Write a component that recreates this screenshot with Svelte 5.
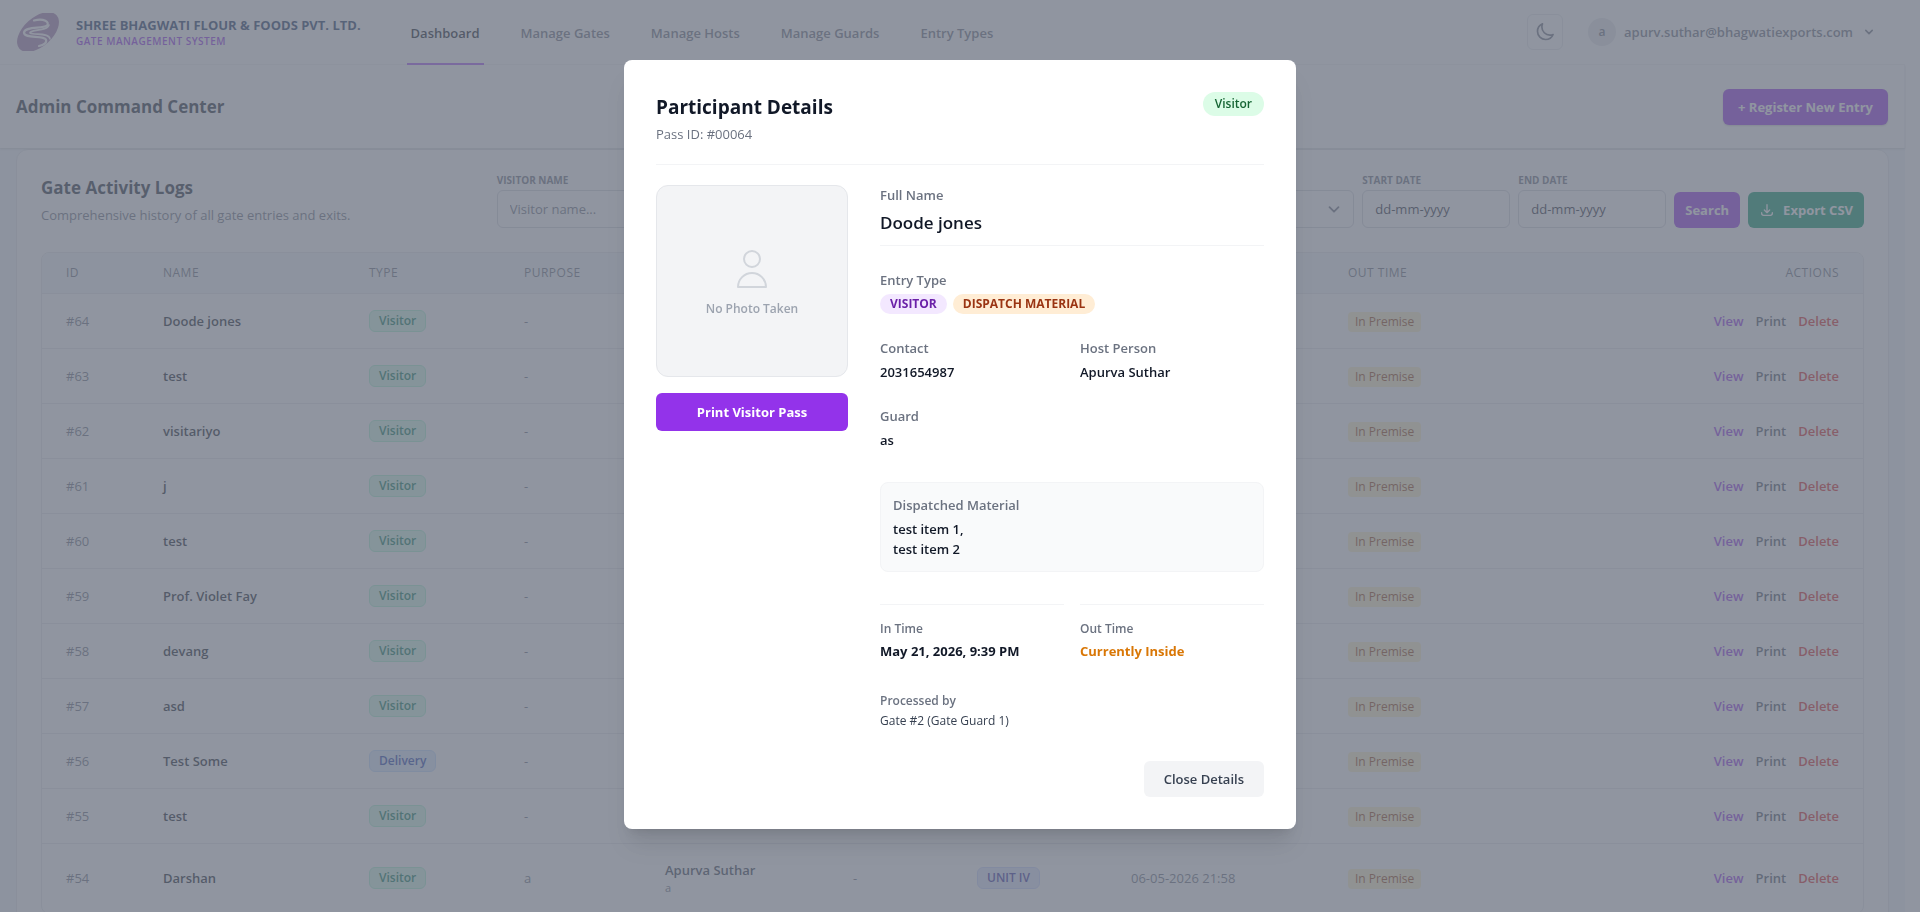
<script>
  const navLinks = ["Dashboard", "Manage Gates", "Manage Hosts", "Manage Guards", "Entry Types"];

  const entries = [
    { id: 64, name: "Doode jones", type: "Visitor", purpose: "-" },
    { id: 63, name: "test", type: "Visitor", purpose: "-" },
    { id: 62, name: "visitariyo", type: "Visitor", purpose: "-" },
    { id: 61, name: "j", type: "Visitor", purpose: "-" },
    { id: 60, name: "test", type: "Visitor", purpose: "-" },
    { id: 59, name: "Prof. Violet Fay", type: "Visitor", purpose: "-" },
    { id: 58, name: "devang", type: "Visitor", purpose: "-" },
    { id: 57, name: "asd", type: "Visitor", purpose: "-" },
    { id: 56, name: "Test Some", type: "Delivery", purpose: "-" },
    { id: 55, name: "test", type: "Visitor", purpose: "-" },
    {
      id: 54,
      name: "Darshan",
      type: "Visitor",
      purpose: "a",
      host: "Apurva Suthar",
      hostNote: "a",
      vehicle: "-",
      unit: "UNIT IV",
      inTime: "06-05-2026 21:58",
    },
  ];

  let showDetails = $state(true);
  let visitorName = $state("");
  let startDate = $state("");
  let endDate = $state("");

  function openDetails() {
    showDetails = true;
  }

  function closeDetails() {
    showDetails = false;
  }
</script>

<div class="app">
  <nav class="navbar">
    <a class="brand" href="/">
      <svg class="logo" viewBox="0 0 44 38" aria-hidden="true">
        <ellipse cx="22" cy="19" rx="25" ry="14.5" transform="rotate(-42 22 19)" fill="#a57fae" />
        <path
          d="M18 7.500C28 5 34 9 31 12.500C27 16 9 13 8 19.500C8 26 27 22 30 26.500C31 30 28 32 23 33"
          fill="none"
          stroke="#fff"
          stroke-width="2.2"
        />
        <path
          d="M14 19.5C16 16 31 18.500 33 12M14 20C18 22.500 33 19 34 26"
          fill="none"
          stroke="#fff"
          stroke-width="1.6"
        />
      </svg>
      <span class="brand-text">
        <span class="brand-name">SHREE BHAGWATI FLOUR &amp; FOODS PVT. LTD.</span>
        <span class="brand-sub">GATE MANAGEMENT SYSTEM</span>
      </span>
    </a>

    <div class="nav-links">
      {#each navLinks as link, i}
        <a href="/" class:active={i === 0}>{link}</a>
      {/each}
    </div>

    <div class="nav-right">
      <button class="theme-toggle" aria-label="Toggle theme">
        <svg viewBox="0 0 24 24" width="20" height="20">
          <path
            d="M21.752 15.002A9.718 9.718 0 0118 15.750c-5.385 0-9.750-4.365-9.750-9.750 0-1.330.266-2.597.748-3.752A9.753 9.753 0 003 11.250C3 16.635 7.365 21 12.750 21a9.753 9.753 0 009.002-5.998z"
          />
        </svg>
      </button>
      <button class="user-menu">
        <span class="avatar">a</span>
        <span>apurv.suthar@bhagwatiexports.com</span>
        <svg viewBox="0 0 20 20" width="16" height="16">
          <path d="M6 8l4 4 4-4" />
        </svg>
      </button>
    </div>
  </nav>

  <header class="page-header">
    <h1>Admin Command Center</h1>
    <button class="btn primary register">+ Register New Entry</button>
  </header>

  <main>
    <section class="card">
      <div class="card-head">
        <div>
          <h2>Gate Activity Logs</h2>
          <p>Comprehensive history of all gate entries and exits.</p>
        </div>

        <form class="filters" onsubmit={(e) => e.preventDefault()}>
          <div class="field wide">
            <label for="visitor-name">VISITOR NAME</label>
            <input id="visitor-name" type="text" placeholder="Visitor name..." bind:value={visitorName} />
          </div>
          <div class="field wide">
            <select aria-label="Type">
              <option value=""></option>
            </select>
          </div>
          <div class="field">
            <label for="start-date">START DATE</label>
            <input class="date" id="start-date" type="text" placeholder="dd-mm-yyyy" bind:value={startDate} />
          </div>
          <div class="field">
            <label for="end-date">END DATE</label>
            <input class="date" id="end-date" type="text" placeholder="dd-mm-yyyy" bind:value={endDate} />
          </div>
          <button class="btn primary search">Search</button>
          <button class="btn export" type="button">
            <svg viewBox="0 0 24 24" width="16" height="16">
              <path d="M4 16v1a3 3 0 003 3h10a3 3 0 003-3v-1m-4-4l-4 4m0 0l-4-4m4 4V4" />
            </svg>
            Export CSV
          </button>
        </form>
      </div>

      <div class="table-wrap">
        <table>
          <colgroup>
            <col class="c-id" />
            <col class="c-name" />
            <col class="c-type" />
            <col class="c-purpose" />
            <col class="c-host" />
            <col class="c-vehicle" />
            <col class="c-unit" />
            <col class="c-in" />
            <col />
            <col class="c-actions" />
          </colgroup>
          <thead>
            <tr>
              <th>ID</th>
              <th>NAME</th>
              <th>TYPE</th>
              <th>PURPOSE</th>
              <th></th>
              <th></th>
              <th></th>
              <th></th>
              <th>OUT TIME</th>
              <th class="right">ACTIONS</th>
            </tr>
          </thead>
          <tbody>
            {#each entries as entry (entry.id)}
              <tr>
                <td>#{entry.id}</td>
                <td class="name">{entry.name}</td>
                <td>
                  <span class="badge" class:delivery={entry.type === "Delivery"}>{entry.type}</span>
                </td>
                <td>{entry.purpose}</td>
                <td>
                  {#if entry.host}
                    <div class="host">{entry.host}</div>
                    <div class="host-note">{entry.hostNote}</div>
                  {/if}
                </td>
                <td>{entry.vehicle ?? ""}</td>
                <td>
                  {#if entry.unit}
                    <span class="badge unit">{entry.unit}</span>
                  {/if}
                </td>
                <td>{entry.inTime ?? ""}</td>
                <td><span class="premise">In Premise</span></td>
                <td>
                  <div class="actions">
                    <button class="view" onclick={openDetails}>View</button>
                    <button class="print">Print</button>
                    <button class="delete">Delete</button>
                  </div>
                </td>
              </tr>
            {/each}
          </tbody>
        </table>
      </div>
    </section>
  </main>
</div>

{#if showDetails}
  <div class="overlay">
    <div class="modal" role="dialog" aria-modal="true" aria-labelledby="modal-title">
      <div class="modal-head">
        <div>
          <h3 id="modal-title">Participant Details</h3>
          <p>Pass ID: #00064</p>
        </div>
        <span class="status">Visitor</span>
      </div>

      <div class="modal-body">
        <div class="photo-col">
          <div class="photo">
            <svg viewBox="0 0 24 24" width="48" height="48">
              <path d="M16 7a4 4 0 11-8 0 4 4 0 018 0zM12 14a7 7 0 00-7 7h14a7 7 0 00-7-7z" />
            </svg>
            <span>No Photo Taken</span>
          </div>
          <button class="btn print-pass">Print Visitor Pass</button>
        </div>

        <dl class="details">
          <div class="full name-row">
            <dt>Full Name</dt>
            <dd class="full-name">Doode jones</dd>
          </div>
          <div class="full">
            <dt>Entry Type</dt>
            <dd class="pills">
              <span class="pill purple">VISITOR</span>
              <span class="pill orange">DISPATCH MATERIAL</span>
            </dd>
          </div>
          <div>
            <dt>Contact</dt>
            <dd>2031654987</dd>
          </div>
          <div>
            <dt>Host Person</dt>
            <dd>Apurva Suthar</dd>
          </div>
          <div class="full">
            <dt>Guard</dt>
            <dd>as</dd>
          </div>
          <div class="full material">
            <dt>Dispatched Material</dt>
            <dd>test item 1,<br />test item 2</dd>
          </div>
          <div class="time">
            <dt>In Time</dt>
            <dd>May 21, 2026, 9:39 PM</dd>
          </div>
          <div class="time">
            <dt>Out Time</dt>
            <dd class="inside">Currently Inside</dd>
          </div>
          <div class="full processed">
            <dt>Processed by</dt>
            <dd>Gate #2 (Gate Guard 1)</dd>
          </div>
        </dl>
      </div>

      <div class="modal-foot">
        <button class="btn close" onclick={closeDetails}>Close Details</button>
      </div>
    </div>
  </div>
{/if}

<style>
  :global(body) {
    font-family: "Segoe UI", "Open Sans", "Noto Sans", sans-serif;
    font-size: 13px;
    line-height: 20px;
    color: #6b7280;
    background: #fff;
  }

  .app,
  .app *,
  .overlay,
  .overlay * {
    box-sizing: border-box;
  }

  h1,
  h2,
  h3,
  p,
  dl,
  dd {
    margin: 0;
  }

  button,
  input,
  select {
    font: inherit;
    color: inherit;
  }

  button {
    padding: 0;
    border: 0;
    background: none;
    cursor: pointer;
    white-space: nowrap;
  }

  a {
    color: inherit;
    text-decoration: none;
  }

  svg {
    flex: none;
    fill: none;
    stroke: currentColor;
    stroke-width: 2;
    stroke-linecap: round;
    stroke-linejoin: round;
  }

  .app {
    height: 100vh;
    overflow: hidden;
    padding-right: 15px;
  }

  /* Navigation */
  .navbar {
    display: flex;
    height: 65px;
    padding: 0 0 0 16px;
    border-bottom: 1px solid #f3f4f6;
  }

  .brand {
    display: flex;
    align-items: center;
    gap: 16px;
  }

  .logo {
    width: 44px;
    height: 38px;
    stroke: none;
  }

  .brand-text {
    display: flex;
    flex-direction: column;
    white-space: nowrap;
  }

  .brand-name {
    font-weight: 700;
    line-height: 18px;
    color: #1e3a66;
  }

  .brand-sub {
    font-size: 10px;
    font-weight: 600;
    line-height: 14px;
    letter-spacing: 0.5px;
    color: #9333ea;
  }

  .nav-links {
    display: flex;
    gap: 33px;
    margin: 0 0 -1px 46px;
    font-weight: 600;
  }

  .nav-links a {
    display: flex;
    align-items: center;
    padding: 2px 4px 0;
    border-bottom: 2px solid transparent;
    white-space: nowrap;
  }

  .nav-links a.active {
    color: #111827;
    border-color: #a855f7;
  }

  .nav-right {
    display: flex;
    align-items: center;
    gap: 25px;
    margin-left: auto;
    padding-right: 28px;
  }

  .theme-toggle {
    display: grid;
    place-items: center;
    width: 36px;
    height: 36px;
    border: 1px solid #e5e7eb;
    border-radius: 6px;
  }

  .user-menu {
    display: flex;
    align-items: center;
    gap: 8px;
    font-weight: 600;
  }

  .avatar {
    width: 28px;
    height: 28px;
    border-radius: 50%;
    background: #e5e7eb;
    font-size: 12px;
    line-height: 28px;
  }

  /* Page header */
  .page-header {
    position: relative;
    display: flex;
    align-items: center;
    justify-content: space-between;
    padding: 24px 16px 23px;
    border-right: 1px solid #f3f4f6;
    box-shadow: 0 1px 2px rgba(0, 0, 0, 0.15);
  }

  h1 {
    font-size: 17px;
    font-weight: 700;
    line-height: 28px;
    color: #1f2937;
  }

  .btn {
    height: 36px;
    border-radius: 6px;
    font-weight: 700;
  }

  .primary {
    color: #fff;
    background: #9333ea;
  }

  .register {
    padding: 0 15px;
    box-shadow: 0 1px 2px rgba(0, 0, 0, 0.2);
  }

  main {
    padding: 1px 16px 0;
    background: #f1f5f9;
  }

  .card {
    padding: 24px;
    border: 1px solid #e5e7eb;
    border-radius: 12px;
    background: #fff;
  }

  .card-head {
    display: flex;
    justify-content: space-between;
    align-items: flex-start;
    gap: 24px;
    margin-bottom: 24px;
  }

  h2 {
    font-size: 17px;
    font-weight: 700;
    line-height: 28px;
    color: #1f2937;
  }

  .card-head p {
    margin-top: 3px;
    white-space: nowrap;
  }

  /* Filters */
  .filters {
    display: flex;
    align-items: flex-end;
    gap: 8px;
    width: 75%;
  }

  .field {
    display: flex;
    flex-direction: column;
    width: 148px;
  }

  .field.wide {
    flex: 1;
  }

  .field label {
    margin-bottom: 4px;
    font-size: 10px;
    font-weight: 700;
    line-height: 12px;
  }

  .field input,
  .field select {
    width: 100%;
    height: 38px;
    padding: 0 12px;
    border: 1px solid #d1d5db;
    border-radius: 6px;
    background-color: #fff;
  }

  .field input::placeholder {
    color: #6b7280;
    opacity: 1;
  }

  .field .date::placeholder {
    color: #1f2937;
  }

  .field select {
    appearance: none;
    background-image: url("data:image/svg+xml,%3Csvg xmlns='http://www.w3.org/2000/svg' viewBox='0 0 20 20' fill='none' stroke='%236b7280' stroke-width='2' stroke-linecap='round' stroke-linejoin='round'%3E%3Cpath d='M5 8l5 5 5-5'/%3E%3C/svg%3E");
    background-position: right 10px center;
    background-repeat: no-repeat;
    background-size: 18px;
  }

  .search {
    padding: 0 11px;
  }

  .export {
    display: flex;
    align-items: center;
    gap: 8px;
    padding: 0 11px;
    color: #fff;
    background: #059669;
  }

  /* Table */
  .table-wrap {
    border: 1px solid #e5e7eb;
    border-radius: 8px;
    overflow: hidden;
  }

  table {
    width: 100%;
    table-layout: fixed;
    border-collapse: separate;
    border-spacing: 0;
  }

  .c-id {
    width: 97px;
  }

  .c-name {
    width: 206px;
  }

  .c-type {
    width: 155px;
  }

  .c-purpose {
    width: 141px;
  }

  .c-host {
    width: 188px;
  }

  .c-vehicle {
    width: 124px;
  }

  .c-unit {
    width: 154px;
  }

  .c-in,
  .c-actions {
    width: 217px;
  }

  th,
  td {
    padding: 0 24px;
    border-bottom: 1px solid #e5e7eb;
    text-align: left;
    white-space: nowrap;
  }

  th {
    height: 41px;
    background: #f3f7fa;
    font-size: 12px;
    font-weight: 500;
    letter-spacing: 0.5px;
  }

  th.right {
    text-align: right;
  }

  td {
    height: 55px;
  }

  tr:last-child td {
    height: 69px;
  }

  .name {
    font-weight: 600;
    color: #111827;
  }

  .host {
    font-weight: 600;
    color: #374151;
    line-height: 20px;
  }

  .host-note {
    font-size: 11px;
    line-height: 16px;
  }

  .badge {
    display: inline-block;
    padding: 0 9px;
    border: 1px solid #a7f3d0;
    border-radius: 6px;
    background: #d1fae5;
    color: #047857;
    font-size: 12px;
    font-weight: 600;
  }

  .badge.delivery {
    border-color: #bfdbfe;
    background: #dbeafe;
    color: #1e40af;
  }

  .badge.unit {
    border-color: #c7d2fe;
    background: #e0e7ff;
    color: #3730a3;
  }

  .premise {
    display: inline-block;
    padding: 0 7px;
    border-radius: 4px;
    background: #fef3c7;
    color: #92400e;
    font-size: 12px;
    font-weight: 500;
  }

  .actions {
    display: flex;
    justify-content: flex-end;
    gap: 12px;
  }

  .actions button {
    font-weight: 600;
  }

  .view {
    color: #9333ea;
  }

  .print {
    color: #4b5563;
  }

  .delete {
    color: #dc2626;
  }

  /* Modal */
  .overlay {
    position: fixed;
    inset: 0;
    display: flex;
    justify-content: center;
    align-items: flex-start;
    padding: 60px 16px;
    overflow: hidden;
    background: rgba(107, 114, 128, 0.75);
  }

  .modal {
    width: 100%;
    max-width: 672px;
    padding: 32px;
    border-radius: 8px;
    background: #fff;
    box-shadow:
      0 20px 25px -5px rgba(0, 0, 0, 0.1),
      0 8px 10px -6px rgba(0, 0, 0, 0.1);
  }

  .modal-head {
    display: flex;
    justify-content: space-between;
    align-items: flex-start;
    padding-bottom: 20px;
    margin-bottom: 20px;
    border-bottom: 1px solid #f3f4f6;
  }

  h3 {
    font-size: 19px;
    font-weight: 700;
    line-height: 30px;
    color: #111827;
  }

  .modal-head p {
    margin-top: 2px;
  }

  .status {
    padding: 2px 12px;
    border-radius: 12px;
    background: #dcfce7;
    color: #166534;
    font-size: 12px;
    font-weight: 600;
  }

  .modal-body {
    display: flex;
    gap: 32px;
  }

  .photo-col {
    width: 192px;
    flex: none;
  }

  .photo {
    display: flex;
    flex-direction: column;
    align-items: center;
    justify-content: center;
    gap: 8px;
    height: 192px;
    margin-bottom: 16px;
    border: 1px solid #e5e7eb;
    border-radius: 12px;
    background: #f3f4f6;
    color: #9ca3af;
    font-size: 12px;
    font-weight: 600;
    line-height: 16px;
  }

  .photo svg {
    color: #d1d5db;
    stroke-width: 1;
  }

  .print-pass {
    width: 100%;
    height: 38px;
    color: #fff;
    background: #9333ea;
  }

  .details {
    display: grid;
    grid-template-columns: 1fr 1fr;
    gap: 24px 16px;
    flex: 1;
  }

  .full {
    grid-column: 1 / -1;
  }

  dt {
    font-weight: 600;
  }

  dd {
    margin-top: 4px;
    font-weight: 600;
    color: #111827;
  }

  .name-row {
    padding-bottom: 8px;
    border-bottom: 1px solid #f3f4f6;
  }

  .full-name {
    font-size: 17px;
    line-height: 28px;
  }

  .pills {
    display: flex;
    gap: 6px;
  }

  .pill {
    padding: 0 10px;
    border-radius: 10px;
    font-size: 12px;
    font-weight: 700;
  }

  .purple {
    background: #f3e8ff;
    color: #6b21a8;
  }

  .orange {
    background: #ffedd5;
    color: #9a3412;
  }

  .material {
    margin: 8px 0;
    padding: 12px;
    border: 1px solid #f3f4f6;
    border-radius: 8px;
    background: #f9fafb;
  }

  .time {
    padding-top: 16px;
    border-top: 1px solid #f3f4f6;
  }

  .time dt,
  .processed {
    font-size: 12px;
    line-height: 16px;
  }

  .time dd {
    font-weight: 700;
  }

  .time .inside {
    color: #d97706;
  }

  .processed {
    margin-top: 8px;
  }

  .processed dd {
    font-weight: 400;
    color: #374151;
  }

  .modal-foot {
    display: flex;
    justify-content: flex-end;
    margin-top: 32px;
  }

  .close {
    padding: 0 20px;
    background: #f3f4f6;
    color: #374151;
    font-weight: 600;
  }
</style>
